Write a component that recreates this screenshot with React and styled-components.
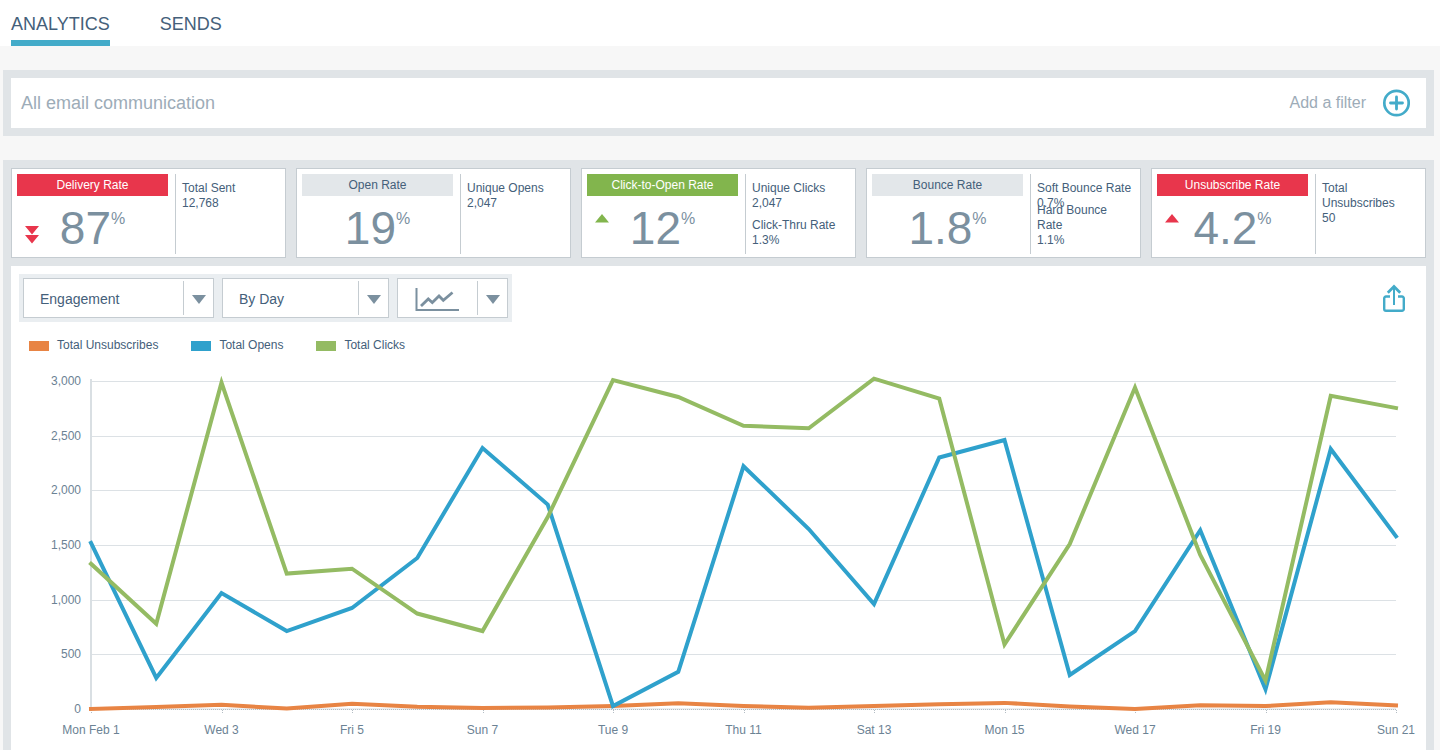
import React, { useState } from "react";
import styled, { createGlobalStyle, css } from "styled-components";

//styling

const GlobalStyle = createGlobalStyle`
  * {
    box-sizing: border-box;
  }

  body {
    margin: 0;
    background: #f7f7f7;
    color: #44607a;
    font-family: "Liberation Sans", Arial, sans-serif;
    font-size: 12px;
    line-height: 15px;
  }

  button, select {
    font-family: inherit;
    color: inherit;
  }
`;

const Page = styled.div`
  display: flex;
  flex-direction: column;
  min-height: 100vh;
`;

const Tabs = styled.nav`
  display: flex;
  gap: 50px;
  height: 46px;
  padding: 0 11px;
  background: white;
`;

const Tab = styled.a`
  padding-top: 14px;
  border-bottom: 6px solid ${props => props.$active ? "#43abc9" : "transparent"};
  color: #44607a;
  font-size: 18px;
  line-height: 20px;
  text-decoration: none;
`;

const FilterBar = styled.section`
  display: flex;
  align-items: center;
  justify-content: space-between;
  height: 66px;
  margin: 24px 6px 24px 3px;
  padding: 0 16px 0 10px;
  border: 8px solid #e0e4e7;
  background: white;
  color: #9dacb8;
`;

const FilterName = styled.h1`
  margin: 0;
  font-size: 18px;
  font-weight: normal;
  line-height: 20px;
`;

const AddFilter = styled.button`
  display: flex;
  align-items: center;
  gap: 16px;
  padding: 0;
  border: 0;
  background: none;
  color: #9dacb8;
  font-size: 16px;
  line-height: 20px;
  cursor: pointer;
`;

const Dashboard = styled.main`
  display: flex;
  flex: 1;
  flex-direction: column;
  gap: 8px;
  margin: 0 6px 0 3px;
  padding: 8px 8px 0;
  background: #e0e4e7;
`;

const Cards = styled.div`
  display: grid;
  grid-template-columns: repeat(5, 1fr);
  gap: 10px;
`;

const Card = styled.section`
  display: grid;
  grid-template-columns: 151fr 105fr;
  gap: 7px;
  height: 90px;
  padding: 5px 5px 3px;
  border: 1px solid #c5ccd1;
  background: white;
`;

const tones = {
  bad: css`
    background: #e8364c;
    color: white;
  `,
  good: css`
    background: #82b54d;
    color: white;
  `,
  neutral: css`
    background: #e3e7ea;
    color: #44607a;
  `,
};

const CardTitle = styled.h2`
  margin: 0;
  font-size: 12px;
  font-weight: normal;
  line-height: 22px;
  text-align: center;
  ${props => tones[props.$tone]}
`;

const Rate = styled.div`
  display: grid;
  grid-template-columns: 24px 1fr 24px;
  height: 58px;
  padding: 0 6px;
`;

const Trend = styled.svg`
  align-self: ${props => props.$down ? "end" : "start"};
  margin: ${props => props.$down ? "0 2px 12px" : "18px 2px 0"};
  fill: ${props => props.$tone === "good" ? "#82b54d" : "#e8364c"};
`;

const Value = styled.p`
  grid-column: 2;
  display: flex;
  justify-content: center;
  margin: 0;
  padding-top: 4px;
  color: #7b909f;
  font-size: 46px;
  line-height: 56px;
`;

const Percent = styled.span`
  padding-top: 9px;
  font-size: 16px;
  line-height: 20px;
`;

const Details = styled.dl`
  display: grid;
  margin: 0;
  padding: 7px 0 6px 6px;
  border-left: 1px solid #c5ccd1;
`;

// details share one cell, the second one hangs from the bottom
const Detail = styled.div`
  grid-area: 1 / 1;
  align-self: ${props => props.$last ? "end" : "start"};

  dt, dd {
    margin: 0;
  }
`;

const ChartPanel = styled.section`
  flex: 1;
  background: white;
`;

const Toolbar = styled.div`
  display: flex;
  align-items: center;
  justify-content: space-between;
  padding: 8px 20px 8px 8px;
`;

const Controls = styled.div`
  display: flex;
  gap: 8px;
  padding: 4px;
  background: #eaeef1;
`;

const Dropdown = styled.div`
  display: grid;
  grid-template-columns: 1fr 30px;
  width: ${props => props.$width}px;
  height: 40px;
  border: 1px solid #c5ccd1;
  background: white;
`;

const controlStyle = css`
  grid-area: 1 / 1 / 2 / 3;
  appearance: none;
  border: 0;
  background: none;
  font-size: 14px;
  cursor: pointer;
`;

const Select = styled.select`
  ${controlStyle}
  padding: 2px 16px 0;
`;

const ChartTypeButton = styled.button`
  ${controlStyle}
  display: flex;
  align-items: center;
  padding: 2px 17px 0;
`;

const Caret = styled.span`
  grid-area: 1 / 2;
  display: flex;
  align-items: center;
  justify-content: center;
  margin: 2px 0;
  padding-top: 2px;
  border-left: 1px solid #c5ccd1;
  pointer-events: none;
`;

const IconButton = styled.button`
  display: flex;
  padding: 0;
  border: 0;
  background: none;
  cursor: pointer;
`;

const Legend = styled.ul`
  display: flex;
  gap: 33px;
  margin: 0;
  padding: 8px 18px;
  list-style: none;
`;

const LegendItem = styled.li`
  display: flex;
  align-items: center;
  gap: 8px;

  &::before {
    content: "";
    width: 20px;
    height: 10px;
    background: ${props => props.$color};
  }
`;

const ChartSvg = styled.svg`
  display: block;
  width: 100%;
  height: auto;

  text {
    fill: #6b8294;
    font-size: 12px;
  }
`;

//data

const cards = [
  {
    title: "Delivery Rate", value: "87", tone: "bad", trend: "down",
    details: [["Total Sent", "12,768"]],
  },
  {
    title: "Open Rate", value: "19", tone: "neutral",
    details: [["Unique Opens", "2,047"]],
  },
  {
    title: "Click-to-Open Rate", value: "12", tone: "good", trend: "up",
    details: [["Unique Clicks", "2,047"], ["Click-Thru Rate", "1.3%"]],
  },
  {
    title: "Bounce Rate", value: "1.8", tone: "neutral",
    details: [["Soft Bounce Rate", "0.7%"], ["Hard Bounce Rate", "1.1%"]],
  },
  {
    title: "Unsubscribe Rate", value: "4.2", tone: "bad", trend: "up",
    details: [["Total Unsubscribes", "50"]],
  },
];

const series = [
  {
    name: "Total Unsubscribes",
    color: "#e88444",
    values: [0, 18, 38, 5, 48, 20, 9, 14, 27, 52, 27, 12, 27, 44, 56, 23, 0, 35, 27, 62, 32],
  },
  {
    name: "Total Opens",
    color: "#2fa1cc",
    values: [1520, 284, 1061, 713, 924, 1381, 2387, 1870, 27, 340, 2220, 1646, 960, 2300, 2460, 311, 713, 1635, 180, 2378, 1580],
  },
  {
    name: "Total Clicks",
    color: "#94bb63",
    values: [1328, 780, 2985, 1239, 1283, 873, 713, 1756, 3009, 2854, 2590, 2568, 3021, 2840, 590, 1509, 2940, 1409, 260, 2865, 2753],
  },
];

const days = ["Mon Feb 1", "Wed 3", "Fri 5", "Sun 7", "Tue 9", "Thu 11", "Sat 13", "Mon 15", "Wed 17", "Fri 19", "Sun 21"];
const ticks = [3000, 2500, 2000, 1500, 1000, 500, 0];

const left = 80;
const right = 1385;
const bottom = 348;
const plotHeight = 328;

const xAt = i => left + (i * (right - left)) / 20;
const yAt = v => bottom - (v * plotHeight) / 3000;

function TrendIcon({ trend, tone }) {
  if (trend === "down") {
    return (
      <Trend $down $tone={tone} width="14" height="18" viewBox="0 0 14 18" aria-label="Falling">
        <path d="M0 0H14L7 8.500ZM0 9H14L7 17.500Z" />
      </Trend>
    );
  }
  return (
    <Trend $tone={tone} width="14" height="9" viewBox="0 0 14 9" aria-label="Rising">
      <path d="M0 8.500H14L7 0Z" />
    </Trend>
  );
}

function RateCard({ title, value, tone, trend, details }) {
  return (
    <Card>
      <div>
        <CardTitle $tone={tone}>{title}</CardTitle>
        <Rate>
          {trend && <TrendIcon trend={trend} tone={tone} />}
          <Value>{value}<Percent>%</Percent></Value>
        </Rate>
      </div>
      <Details>
        {details.map(([name, amount], i) => (
          <Detail key={name} $last={i > 0}>
            <dt>{name}</dt>
            <dd>{amount}</dd>
          </Detail>
        ))}
      </Details>
    </Card>
  );
}

function CaretIcon() {
  return (
    <Caret>
      <svg width="14" height="9" viewBox="0 0 14 9">
        <path d="M0 0H14L7 9Z" fill="#7b909f" />
      </svg>
    </Caret>
  );
}

function Chart() {
  return (
    <ChartSvg viewBox="0 0 1415 385" role="img" aria-label="Engagement by day">
      {ticks.map(t => (
        <g key={t}>
          {t > 0 && <path d={`M${left} ${Math.round(yAt(t)) + 0.5}H${right}`} stroke="#dce1e5" />}
          <text x="70" y={Math.round(yAt(t)) + 4} textAnchor="end">{t.toLocaleString("en-US")}</text>
        </g>
      ))}
      <path d={`M${left} 18V${bottom}`} stroke="#d9dfe3" strokeWidth="2" />
      <path d={`M${left} ${bottom}H${right}`} stroke="#eceff1" strokeWidth="2" />
      <path d={`M${left} ${bottom + 0.5}H${right}`} stroke="#b4bdc4" strokeDasharray="1 1" />
      {days.map((day, i) => (
        <g key={day}>
          <path d={`M${Math.round(xAt(i * 2)) + 0.5} ${bottom + 1}v4`} stroke="#b4bdc4" strokeDasharray="1 1" />
          <text x={xAt(i * 2)} y="373" textAnchor="middle">{day}</text>
        </g>
      ))}
      {series.map(s => (
        <polyline
          key={s.name}
          points={s.values.map((v, i) => `${xAt(i)},${yAt(v)}`).join(" ")}
          fill="none"
          stroke={s.color}
          strokeWidth="4"
          strokeLinecap="square"
        />
      ))}
    </ChartSvg>
  );
}

function App() {
  const [metric, setMetric] = useState("Engagement");
  const [period, setPeriod] = useState("By Day");

  return (
    <Page>
      <GlobalStyle />
      <Tabs>
        <Tab href="#analytics" $active>ANALYTICS</Tab>
        <Tab href="#sends">SENDS</Tab>
      </Tabs>

      <FilterBar>
        <FilterName>All email communication</FilterName>
        <AddFilter type="button">
          Add a filter
          <svg width="28" height="28" viewBox="0 0 28 28" fill="none" stroke="#43abc9">
            <circle cx="14.500" cy="14" r="12.200" strokeWidth="2.700" />
            <path d="M14.500 8v12M8.500 14h12" strokeWidth="2.800" strokeLinecap="round" />
          </svg>
        </AddFilter>
      </FilterBar>

      <Dashboard>
        <Cards>
          {cards.map(card => <RateCard key={card.title} {...card} />)}
        </Cards>

        <ChartPanel>
          <Toolbar>
            <Controls>
              <Dropdown $width={191}>
                <Select aria-label="Metric" value={metric} onChange={e => setMetric(e.target.value)}>
                  <option>Engagement</option>
                </Select>
                <CaretIcon />
              </Dropdown>
              <Dropdown $width={167}>
                <Select aria-label="Period" value={period} onChange={e => setPeriod(e.target.value)}>
                  <option>By Day</option>
                </Select>
                <CaretIcon />
              </Dropdown>
              <Dropdown $width={111}>
                <ChartTypeButton type="button" aria-label="Chart type" aria-haspopup="listbox">
                  <svg width="44" height="24" viewBox="0 0 44 24" fill="none" stroke="#7b909f">
                    <path d="M1.500 1V23H44" strokeWidth="2" />
                    <path d="M6 19L13.300 12L17.300 15.500L24 9L28.300 13.300L37.500 5.500" strokeWidth="2.800" />
                  </svg>
                </ChartTypeButton>
                <CaretIcon />
              </Dropdown>
            </Controls>
            <IconButton type="button" aria-label="Share">
              <svg width="24" height="28" viewBox="0 0 24 28" fill="none" stroke="#43abc9" strokeWidth="2.400">
                <path d="M8 12.500H4a1.800 1.800 0 0 0-1.800 1.800V25a1.800 1.800 0 0 0 1.800 1.800H20a1.800 1.800 0 0 0 1.800-1.800V14.300a1.800 1.800 0 0 0-1.800-1.800H16" />
                <path d="M12 21V3" strokeWidth="2" />
                <path d="M5.800 8.700L12 2.500L18.200 8.700" strokeWidth="2.700" />
              </svg>
            </IconButton>
          </Toolbar>

          <Legend>
            {series.map(s => <LegendItem key={s.name} $color={s.color}>{s.name}</LegendItem>)}
          </Legend>

          <Chart />
        </ChartPanel>
      </Dashboard>
    </Page>
  );
}

export default App;
